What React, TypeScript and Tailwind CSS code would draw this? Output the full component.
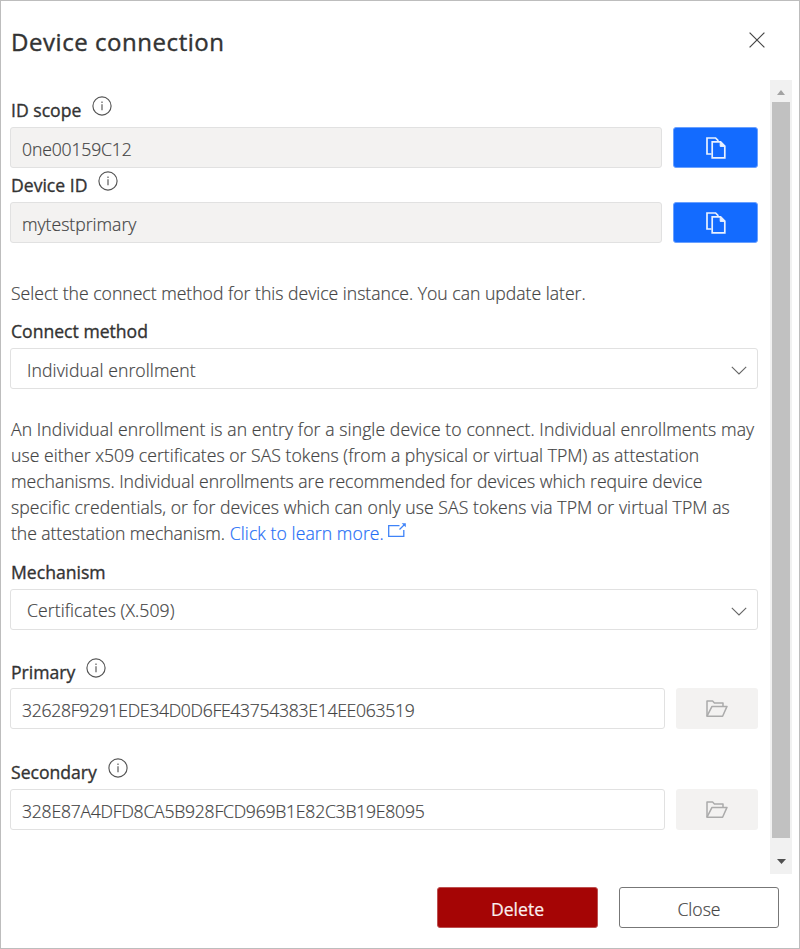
import type { ReactNode } from 'react';

function InfoIcon() {
  return (
    <svg className="h-5 w-5 shrink-0" viewBox="0 0 20 20" fill="none" stroke="#555" strokeWidth="1.15">
      <circle cx="10" cy="10" r="9.1" />
      <path d="M10 8.3V14.2" />
      <path d="M10 5.6V7" />
    </svg>
  );
}

function CopyIcon() {
  return (
    <svg className="h-[22px] w-5" viewBox="0 0 20 22" fill="none" stroke="#e9f1ff" strokeWidth="1.7">
      <path d="M5.5 17H1V1H9.6L12.4 3.8" />
      <path d="M6.2 4.8H14.6L18.8 9V20.8H6.2Z" />
      <path d="M14.2 5V9.4H18.6Z" fill="#e9f1ff" strokeWidth="1" />
    </svg>
  );
}

function FolderIcon() {
  return (
    <svg className="mt-px h-[18px] w-[22px]" viewBox="0 0 22 18" fill="none" stroke="#ababab" strokeWidth="1.5" strokeLinejoin="round">
      <path d="M1 16.2V1H6.6L8.4 2.9H17V6.3" />
      <path d="M1 16.2L6 6.4H21L16.6 16.2Z" />
    </svg>
  );
}

function Chevron() {
  return (
    <svg className="h-[9px] w-4" viewBox="0 0 16 9" fill="none" stroke="#666" strokeWidth="1.1">
      <path d="M.8 .8L8 8L15.2 .8" />
    </svg>
  );
}

function Label({ children, info }: { children: ReactNode; info?: boolean }) {
  return (
    <div className="flex h-[26px] items-center gap-[11px] pl-px">
      <span className="font-normal text-[#333] [-webkit-text-stroke:0.35px_#333]">{children}</span>
      {info && <span className="-mt-2"><InfoIcon /></span>}
    </div>
  );
}

function Select({ children, className }: { children: ReactNode; className: string }) {
  return (
    <div className="flex h-[41px] w-[748px] items-center justify-between rounded-[3px] border border-[#e1e1e1] pr-[10px] pl-4 text-[#444]">
      <span className={className}>{children}</span>
      <span className="pt-[3px]"><Chevron /></span>
    </div>
  );
}

export default function App() {
  return (
    <div className="flex h-[949px] w-[800px] flex-col border border-[#bdbdbd] bg-white font-['Open_Sans','Noto_Sans',sans-serif] text-[17.6px] leading-[26px] font-light whitespace-nowrap text-[#444] [-webkit-text-stroke:0.2px]">
      <header className="flex h-[79px] items-center justify-between pr-[34px] pl-[10px]">
        <h1 className="pt-0.5 text-[24px] font-normal tracking-[0.55px] text-[#333] [-webkit-text-stroke:0.4px_#333]">Device connection</h1>
        <svg className="-mt-0.5 h-4 w-4" viewBox="0 0 16 16" fill="none" stroke="#444" strokeWidth="1.2">
          <path d="M.6 .6L15.4 15.4M15.4 .6L.6 15.4" />
        </svg>
      </header>

      <div className="flex h-[794px] justify-between pr-[7px] pl-[9px]">
        <main className="flex w-[748px] flex-col pt-[17px]">
          <Label info>ID scope</Label>
          <div className="mt-1 flex justify-between">
            <div className="flex h-[41px] w-[652px] items-center rounded-[3px] border border-[#e1e1e1] bg-[#f3f2f1] pt-[3px] pl-[11px] tracking-[-0.15px]">0ne00159C12</div>
            <button className="flex h-[41px] w-[85px] items-center justify-center rounded-[3px] border border-[#69a0ff] bg-[#136bff] pt-px"><CopyIcon /></button>
          </div>
          <div className="mt-1"><Label info>Device ID</Label></div>
          <div className="mt-1 flex justify-between">
            <div className="flex h-[41px] w-[652px] items-center rounded-[3px] border border-[#e1e1e1] bg-[#f3f2f1] pt-0.5 pl-[11px]">mytestprimary</div>
            <button className="flex h-[41px] w-[85px] items-center justify-center rounded-[3px] border border-[#69a0ff] bg-[#136bff]"><CopyIcon /></button>
          </div>

          <p className="mt-[37px] pl-px">Select the connect method for this device instance. You can update later.</p>
          <div className="mt-3"><Label>Connect method</Label></div>
          <div className="mt-1"><Select className="pt-[3px] tracking-[0.1px]">Individual enrollment</Select></div>

          <p className="mt-[27px] flex flex-col items-start pl-px">
            <span className="tracking-[0.096px]">An Individual enrollment is an entry for a single device to connect. Individual enrollments may</span>
            <span className="tracking-[0.035px]">use either x509 certificates or SAS tokens (from a physical or virtual TPM) as attestation</span>
            <span className="tracking-[-0.015px]">mechanisms. Individual enrollments are recommended for devices which require device</span>
            <span className="tracking-[0.08px]">specific credentials, or for devices which can only use SAS tokens via TPM or virtual TPM as</span>
            <span className="flex">
              <span className="tracking-[-0.06px]">the attestation mechanism.</span>
              <a className="ml-[5px] flex text-[#1f6ef6]">
                <span className="tracking-[0.08px]">Click to learn more.</span>
                <svg className="mt-[3px] ml-1 h-[14px] w-[18px]" viewBox="0 0 18 14" fill="none" stroke="#3f83f8" strokeWidth="1.3">
                  <path d="M11.5 2.7H.7V13.3H15.8V7" />
                  <path d="M11.5 6.5L16.5 1.5" />
                  <path d="M13.7 .3H17.8V4.3Z" fill="#3f83f8" stroke="none" />
                </svg>
              </a>
            </span>
          </p>

          <div className="mt-[13px]"><Label>Mechanism</Label></div>
          <div className="mt-1"><Select className="pt-px tracking-[0.08px]">Certificates (X.509)</Select></div>

          <div className="mt-[29px]"><Label info>Primary</Label></div>
          <div className="mt-[3px] flex justify-between">
            <div className="flex h-[41px] w-[655px] items-center rounded-[3px] border border-[#e1e1e1] pt-[3px] pl-[11px] tracking-[-0.3px]">32628F9291EDE34D0D6FE43754383E14EE063519</div>
            <button className="flex h-[41px] w-[82px] items-center justify-center rounded-[3px] bg-[#f3f2f1]"><FolderIcon /></button>
          </div>
          <div className="mt-[30px]"><Label info>Secondary</Label></div>
          <div className="mt-1 flex justify-between">
            <div className="flex h-[41px] w-[655px] items-center rounded-[3px] border border-[#e1e1e1] pt-[3px] pl-[11px] tracking-[-0.24px]">328E87A4DFD8CA5B928FCD969B1E82C3B19E8095</div>
            <button className="flex h-[41px] w-[82px] items-center justify-center rounded-[3px] bg-[#f3f2f1]"><FolderIcon /></button>
          </div>
        </main>

        <div className="flex w-[22px] flex-col items-center bg-[#f1f1f1]">
          <svg className="mt-[10px] h-[5px] w-2" viewBox="0 0 8 5"><path d="M4 0L8 5H0Z" fill="#a3a3a3" /></svg>
          <div className="mt-[7px] h-[736px] w-[18px] bg-[#c1c1c1]" />
          <svg className="mt-[21px] h-[5px] w-[9px]" viewBox="0 0 9 5"><path d="M0 0H9L4.5 5Z" fill="#505050" /></svg>
        </div>
      </div>

      <footer className="mt-[13px] flex justify-end gap-[21px] pr-5">
        <button className="flex h-[41px] w-[161px] items-center justify-center rounded-[3px] border border-[#bd5050] bg-[#a50505] pt-[3px] font-normal text-[#faf0f0]">Delete</button>
        <button className="flex h-[41px] w-[160px] items-center justify-center rounded-[3px] border border-[#777] bg-white pt-[3px]">Close</button>
      </footer>
    </div>
  );
}
